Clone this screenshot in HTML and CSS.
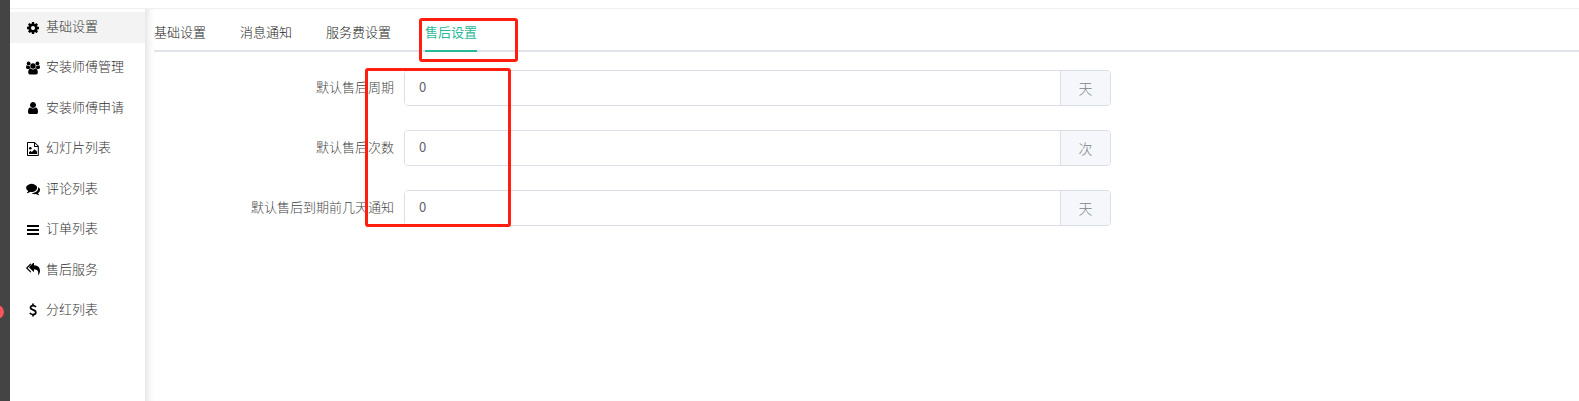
FILE: index.html
```html
<!DOCTYPE html>
<html lang="zh-CN">
<head>
<meta charset="utf-8">
<title>售后设置</title>
<link rel="stylesheet" href="styles.css">
</head>
<body>
<div class="app">
  <aside class="rail"><span class="rail-badge"></span></aside>
  <div class="page">
    <header class="topbar"></header>
    <div class="body">
      <nav class="sidebar">
        <ul class="menu">
          <li><a class="menu-item active" href="#"><svg class="icon" viewBox="0 0 1792 1792"><path d="M1152 896q0-106-75-181t-181-75-181 75-75 181 75 181 181 75 181-75 75-181zm512-109v222q0 12-8 23t-20 13l-185 28q-19 54-39 91 35 50 107 138 10 12 10 25t-9 23q-27 37-99 108t-94 71q-12 0-26-9l-138-108q-44 23-91 38-16 136-29 186-7 28-36 28h-222q-14 0-24.500-8.500t-11.500-21.500l-28-184q-49-16-90-37l-141 107q-10 9-25 9-14 0-25-11-126-114-165-168-7-10-7-23 0-12 8-23 15-21 51-66.500t54-70.500q-27-50-41-99l-183-27q-13-2-21-12.500t-8-23.500v-222q0-12 8-23t19-13l186-28q14-46 39-92-40-57-107-138-10-12-10-24 0-10 9-23 26-36 98.500-107.500t94.500-71.500q13 0 26 10l138 107q44-23 91-38 16-136 29-186 7-28 36-28h222q14 0 24.500 8.500t11.500 21.500l28 184q49 16 90 37l142-107q9-9 24-9 13 0 25 10 129 119 165 170 7 8 7 22 0 12-8 23-15 21-51 66.500t-54 70.500q26 50 41 98l183 28q13 2 21 12.500t8 23.500z"/></svg>基础设置</a></li>
          <li><a class="menu-item" href="#"><svg class="icon" viewBox="0 0 14 14"><circle cx="2.600" cy="2.500" r="1.900"/><circle cx="11.400" cy="2.500" r="1.900"/><circle cx="7" cy="5" r="2.700"/><path d="M0 6.200Q0 4.200 1 4.200Q2.500 5.300 3.700 4.700Q3.700 6.300 4.600 7.200Q3.300 7.200 2.600 8H1.300Q0 8 0 6.200zM14 6.200Q14 4.200 13 4.200Q11.500 5.300 10.300 4.700Q10.300 6.300 9.400 7.200Q10.700 7.200 11.400 8H12.700Q14 8 14 6.200zM2.200 11.700Q2.200 7.500 4.700 7.500Q7 9.300 9.300 7.500Q11.800 7.500 11.800 11.700Q11.800 13.500 10 13.500H4Q2.200 13.500 2.200 11.700z"/></svg>安装师傅管理</a></li>
          <li><a class="menu-item" href="#"><svg class="icon" viewBox="0 0 1792 1792"><path d="M1536 1399q0 109-62.500 187t-150.500 78h-854q-88 0-150.500-78t-62.500-187q0-85 8.500-160.500t31.500-152 58.500-131 94-89 134.500-34.500q131 128 313 128t313-128q76 0 134.500 34.500t94 89 58.500 131 31.500 152 8.500 160.500zm-256-887q0 159-112.500 271.500t-271.500 112.500-271.500-112.500-112.500-271.500 112.500-271.500 271.500-112.500 271.500 112.500 112.500 271.500z"/></svg>安装师傅申请</a></li>
          <li><a class="menu-item" href="#"><svg class="icon" viewBox="0 0 14 14"><path fill-rule="evenodd" d="M1.800 0H8.700L12.800 4V13.200Q12.800 14 12 14H1.800Q1 14 1 13.200V.8Q1 0 1.800 0zM2 1V13H11.800V5H8.500Q8 5 8 4.400V1zM9 1.400V4H11.600z"/><circle cx="4.300" cy="6.300" r="1.300"/><path d="M3 12V10.200L4.500 8.700L5.800 9.900L8.500 7.200L11 9.500V12z"/></svg>幻灯片列表</a></li>
          <li><a class="menu-item" href="#"><svg class="icon" viewBox="0 0 1792 1792"><path d="M1408 768q0 139-94 257t-256.500 186.500-353.500 68.500q-86 0-176-16-124 88-278 128-36 9-86 16h-3q-11 0-20.500-8t-11.500-21q-1-10 4-20l32-38q50-50 74-88t44-84q-124-72-195-177t-71-224q0-139 94-257t256.500-186.500 353.500-68.500 353.500 68.500 256.500 186.500 94 257zm384 256q0 120-71 224.500t-195 176.500q20 48 46 84t74 84l30 36q8 12 4 22-3 14-13 22t-22 7q-50-7-86-16-154-40-278-128-90 16-176 16-271 0-472-132 58 4 88 4 161 0 309-45t264-129q125-92 192-212t67-254q0-77-23-152 129 71 204 178t75 230z"/></svg>评论列表</a></li>
          <li><a class="menu-item" href="#"><svg class="icon" viewBox="0 0 14 14"><path d="M1 2h12v2H1zM1 6h12v2H1zM1 10h12v2H1z"/></svg>订单列表</a></li>
          <li><a class="menu-item" href="#"><svg class="icon" viewBox="0 0 1792 1792"><path d="M640 1082v70q0 42-39 59-13 5-25 5-27 0-45-19l-512-512q-19-19-19-45t19-45l512-512q29-31 70-14 39 17 39 59v69l-397 398q-19 19-19 45t19 45zm1152-58q0 58-17 133.500t-38.500 138-48 125-40.500 90.500l-20 40q-8 17-28 17-6 0-9-1-25-8-23-34 43-400-106-565-64-71-170.500-110.500t-267.500-52.500v251q0 42-39 59-13 5-25 5-27 0-45-19l-512-512q-19-19-19-45t19-45l512-512q29-31 70-14 39 17 39 59v262q411 28 599 221 169 173 169 509z"/></svg>售后服务</a></li>
          <li><a class="menu-item" href="#"><svg class="icon" viewBox="0 0 14 14"><path fill="none" stroke="currentColor" stroke-width="1.700" d="M10 4Q8.800 2.600 7 2.600Q4.500 2.600 4.500 4.600Q4.500 6.200 7 6.900Q9.800 7.700 9.800 9.500Q9.800 11.500 7 11.500Q5.200 11.500 3.800 10M7 0.500V2.600M7 11.500V13.600"/></svg>分红列表</a></li>
        </ul>
      </nav>
      <main class="content">
        <nav class="tabs">
          <a class="tab" href="#">基础设置</a>
          <a class="tab" href="#">消息通知</a>
          <a class="tab" href="#">服务费设置</a>
          <a class="tab current" href="#">售后设置</a>
        </nav>
        <form class="form">
          <div class="row">
            <label class="label" for="period">默认售后周期</label>
            <div class="group"><input class="input" id="period" type="text" value="0"><span class="unit">天</span></div>
          </div>
          <div class="row">
            <label class="label" for="times">默认售后次数</label>
            <div class="group"><input class="input" id="times" type="text" value="0"><span class="unit">次</span></div>
          </div>
          <div class="row">
            <label class="label" for="notice">默认售后到期前几天通知</label>
            <div class="group"><input class="input" id="notice" type="text" value="0"><span class="unit">天</span></div>
          </div>
        </form>
      </main>
    </div>
  </div>
  <div class="mark mark-tab"></div>
  <div class="mark mark-fields"></div>
</div>
</body>
</html>
```
FILE: styles.css
```css
* { box-sizing: border-box; }

body {
  margin: 0;
  background: #fff;
  color: #222;
  font-family: "Noto Sans CJK SC", sans-serif;
  font-size: 13px;
  font-weight: 300;
  line-height: 20px;
}

a { color: inherit; text-decoration: none; }

.app {
  position: relative;
  display: flex;
  min-height: 100vh;
  overflow: hidden;
}

.rail {
  position: relative;
  flex: none;
  width: 10px;
  background: #444;
  overflow: hidden;
}

.rail-badge {
  position: absolute;
  top: 305px;
  right: 6px;
  width: 14px;
  height: 14px;
  border-radius: 50%;
  background: #f75659;
}

.page {
  display: flex;
  flex: 1;
  flex-direction: column;
  min-width: 0;
}

.topbar {
  height: 9px;
  border-bottom: 1px solid #f0f0f0;
}

.body { display: flex; flex: 1; }

.sidebar {
  flex: none;
  width: 135px;
  padding-top: 3px;
}

.menu {
  display: flex;
  flex-direction: column;
  justify-content: space-between;
  height: 314px;
  margin: 0;
  padding: 0;
  list-style: none;
}

.menu-item {
  display: flex;
  align-items: center;
  gap: 6px;
  height: 31px;
  padding: 0 16px 3px;
  color: #333;
}

.menu-item.active { background: #f3f3f3; }

.icon {
  flex: none;
  width: 14px;
  height: 14px;
  margin-top: 3px;
  color: #000;
  fill: currentColor;
}

.content {
  flex: 1;
  min-width: 0;
  padding: 11px 0 0 9px;
  box-shadow: inset 8px 0 8px -6px #ddd;
}

.tabs {
  display: flex;
  gap: 34px;
  border-bottom: 2px solid #e0e4ea;
}

.tab {
  height: 32px;
  margin-bottom: -2px;
  padding-top: 2px;
  border-bottom: 2px solid transparent;
}

.tab.current {
  border-color: #29b998;
  color: #29b998;
  font-weight: 400;
}

.form {
  display: flex;
  flex-direction: column;
  gap: 24px;
  padding-top: 18px;
}

.row { display: flex; }

.label {
  flex: none;
  width: 250px;
  padding: 7px 10px 0 0;
  color: #444;
  text-align: right;
}

.group {
  display: flex;
  flex: 0 1 707px;
  min-width: 0;
  height: 36px;
  border: 1px solid #dcdfe6;
  border-radius: 4px;
  overflow: hidden;
}

.input {
  flex: 1;
  min-width: 0;
  padding: 0 14px 2px;
  border: 0;
  outline: 0;
  background: #fff;
  color: #606266;
  font: inherit;
  font-weight: 400;
}

.unit {
  flex: none;
  width: 50px;
  padding-top: 7px;
  border-left: 1px solid #dcdfe6;
  background: #f5f7fa;
  color: #808389;
  font-size: 14px;
  text-align: center;
}

.mark {
  position: absolute;
  border: 3px solid #ff1e10;
  border-radius: 3px;
  pointer-events: none;
}

.mark-tab { top: 18px; left: 419px; width: 99px; height: 44px; }
.mark-fields { top: 68px; left: 365px; width: 146px; height: 159px; }
```
